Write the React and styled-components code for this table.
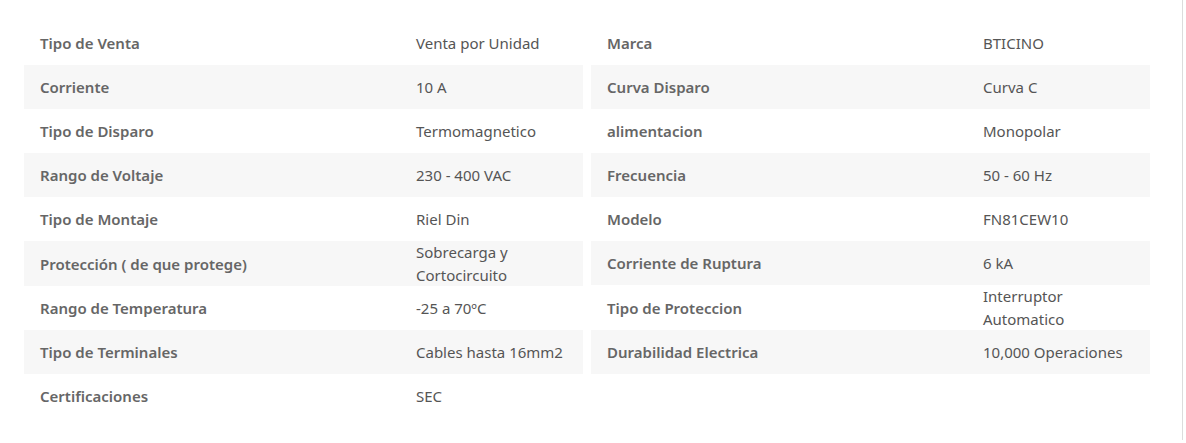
import React from 'react';
import styled, { createGlobalStyle } from 'styled-components';

const GlobalStyle = createGlobalStyle`
  html, body {
    margin: 0;
    padding: 0;
    background: #fff;
  }
  body {
    font-family: 'Noto Sans', 'Open Sans', sans-serif;
  }
`;

const StyledPanel = styled.section`
  box-sizing: border-box;
  width: 1183px;
  height: 440px;
  padding: 21px 0 0 24px;
  border-right: 1px solid #dcdcdc;
`;

const StyledColumns = styled.div`
  display: grid;
  grid-template-columns: 559px 559px;
  column-gap: 8px;
  align-items: start;
`;

const StyledTable = styled.div`
  display: flex;
  flex-direction: column;
`;

const StyledRow = styled.div`
  display: grid;
  grid-template-columns: 392px 1fr;
  align-items: center;
  min-height: 44px;
  background: ${({ $striped }) => ($striped ? '#f7f7f7' : 'transparent')};
  font-size: 15px;
  line-height: 22.5px;
`;

const StyledLabel = styled.div`
  padding: 1px 16px 0;
  color: #666;
  font-weight: 600;
`;

const StyledValue = styled.div`
  padding-right: 4px;
  color: #555;
  font-weight: 400;
`;

const left = [
  ['Tipo de Venta', 'Venta por Unidad'],
  ['Corriente', '10 A'],
  ['Tipo de Disparo', 'Termomagnetico'],
  ['Rango de Voltaje', '230 - 400 VAC'],
  ['Tipo de Montaje', 'Riel Din'],
  ['Protección ( de que protege)', 'Sobrecarga y Cortocircuito'],
  ['Rango de Temperatura', '-25 a 70ºC'],
  ['Tipo de Terminales', 'Cables hasta 16mm2'],
  ['Certificaciones', 'SEC'],
];

const right = [
  ['Marca', 'BTICINO'],
  ['Curva Disparo', 'Curva C'],
  ['alimentacion', 'Monopolar'],
  ['Frecuencia', '50 - 60 Hz'],
  ['Modelo', 'FN81CEW10'],
  ['Corriente de Ruptura', '6 kA'],
  ['Tipo de Proteccion', 'Interruptor Automatico'],
  ['Durabilidad Electrica', '10,000 Operaciones'],
];

const SpecTable = ({ rows }) => (
  <StyledTable>
    {rows.map(([label, value], i) => (
      <StyledRow key={label} $striped={i % 2 === 1}>
        <StyledLabel>{label}</StyledLabel>
        <StyledValue>{value}</StyledValue>
      </StyledRow>
    ))}
  </StyledTable>
);

const App = () => (
  <>
    <GlobalStyle />
    <StyledPanel>
      <StyledColumns>
        <SpecTable rows={left} />
        <SpecTable rows={right} />
      </StyledColumns>
    </StyledPanel>
  </>
);

export default App;
